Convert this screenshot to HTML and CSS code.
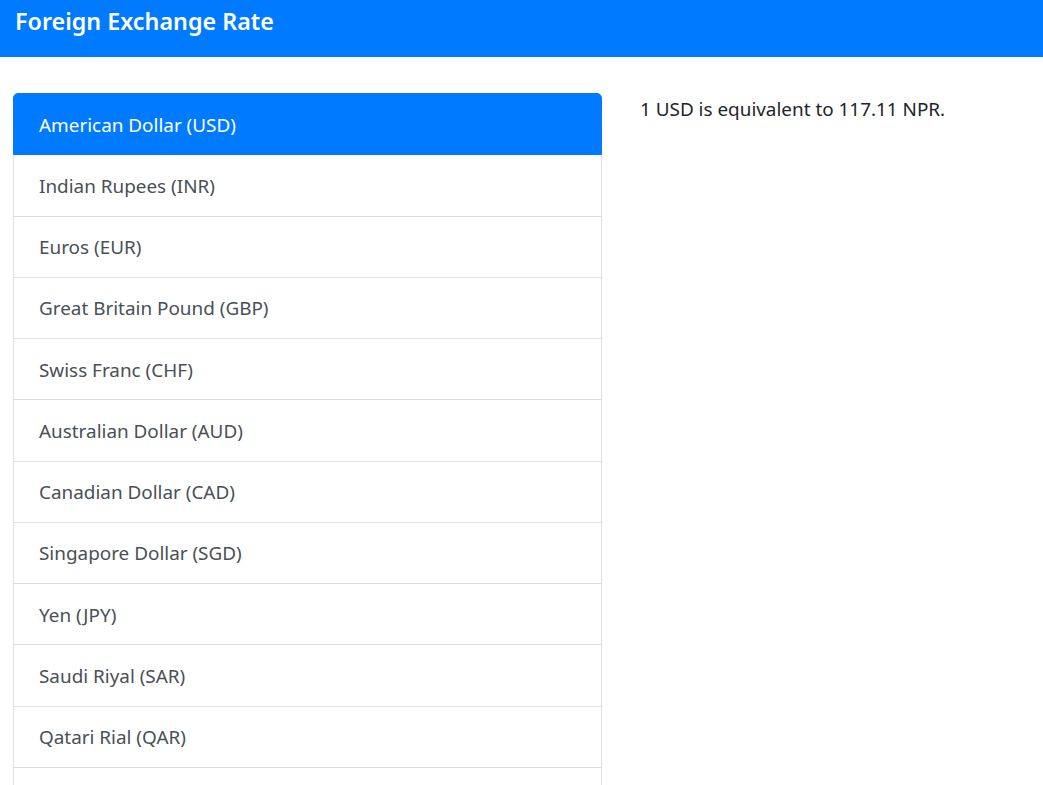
FILE: index.html
```html
<!DOCTYPE html>
<html lang="en">
<head>
<meta charset="utf-8">
<title>Foreign Exchange Rate</title>
<link rel="stylesheet" href="styles.css">
</head>
<body>
<header class="topbar">
  <h1 class="brand">Foreign Exchange Rate</h1>
</header>
<main class="content">
  <div class="list-col">
    <ul class="currency-list">
      <li class="item active">American Dollar (USD)</li>
      <li class="item">Indian Rupees (INR)</li>
      <li class="item">Euros (EUR)</li>
      <li class="item">Great Britain Pound (GBP)</li>
      <li class="item">Swiss Franc (CHF)</li>
      <li class="item">Australian Dollar (AUD)</li>
      <li class="item">Canadian Dollar (CAD)</li>
      <li class="item">Singapore Dollar (SGD)</li>
      <li class="item">Yen (JPY)</li>
      <li class="item">Saudi Riyal (SAR)</li>
      <li class="item">Qatari Rial (QAR)</li>
      <li class="item">&nbsp;</li>
    </ul>
  </div>
  <div class="result-col">
    <p class="result">1 USD is equivalent to 117.11 NPR.</p>
  </div>
</main>
</body>
</html>
```

FILE: styles.css
```css
html, body {
  margin: 0;
  padding: 0;
  background: #ffffff;
}
body {
  font-family: "Noto Sans", "Open Sans", sans-serif;
  font-size: 18.9px;
  color: #212529;
}
.topbar {
  background: #007bff;
  height: 57px;
  padding: 0 15px;
  box-sizing: border-box;
}
.brand {
  margin: 0;
  padding-top: 4px;
  font-size: 23.3px;
  line-height: 34px;
  font-weight: 600;
  color: #ffffff;
}
.content {
  display: flex;
  align-items: flex-start;
  padding: 36px 0 0 13px;
}
.list-col {
  width: 589px;
  flex: none;
}
.currency-list {
  list-style: none;
  margin: 0;
  padding: 0;
}
.item {
  padding: 15.5px 25px 14.75px;
  line-height: 30px;
  color: #495057;
  border: 1px solid #dfdfdf;
  border-top-width: 0;
  background: #fff;
}
.item:first-child {
  border-top-width: 1px;
  border-radius: 5px 5px 0 0;
}
.item.active {
  background: #007bff;
  border-color: #007bff;
  color: #ffffff;
}
.result-col {
  padding-left: 38px;
}
.result {
  margin: 0;
  padding-top: 1px;
  line-height: 30px;
}
```
